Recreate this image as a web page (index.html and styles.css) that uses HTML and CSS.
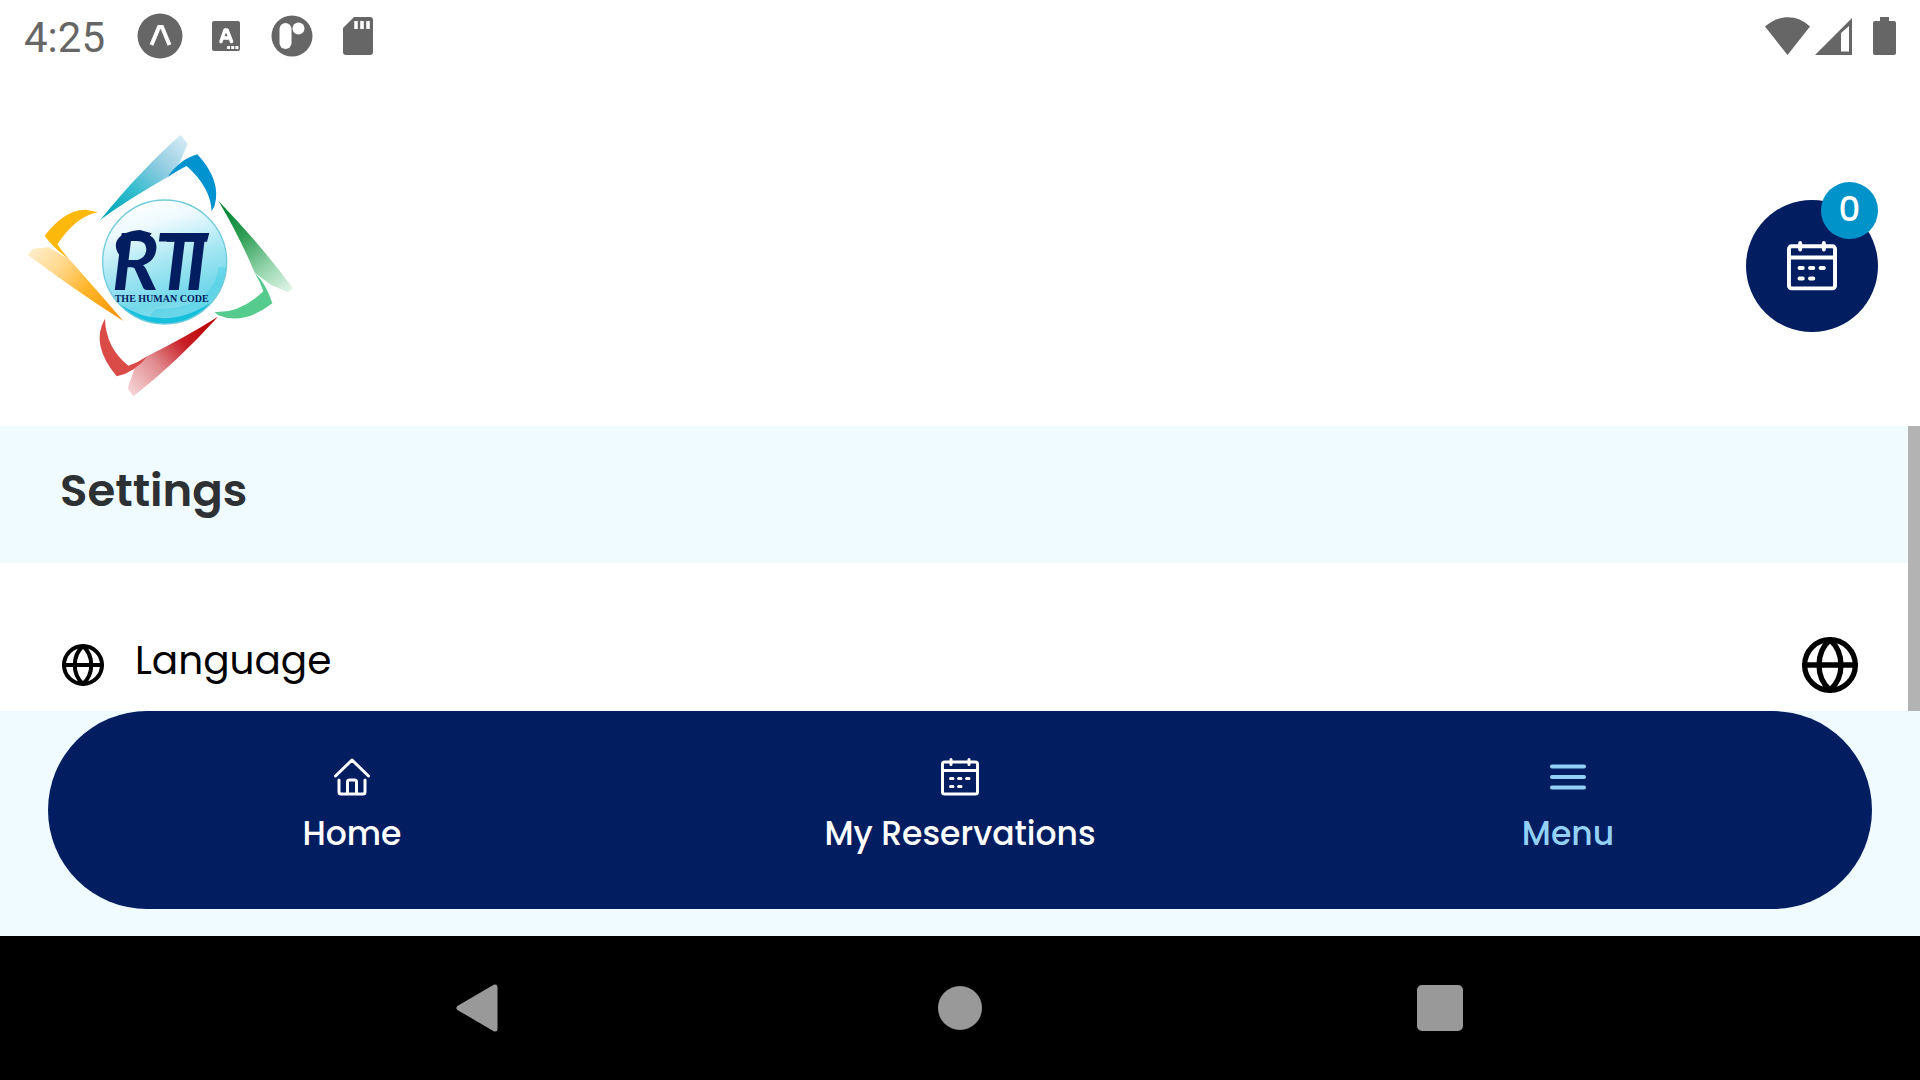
FILE: index.html
```html
<!DOCTYPE html>
<html lang="en">
<head>
  <meta charset="UTF-8">
  <meta name="viewport" content="width=device-width, initial-scale=1.0">
  <title>Settings - RTI The Human Code</title>
  <link rel="stylesheet" href="styles.css">
</head>
<body>
  <div class="status-bar">
    <span class="clock">4:25</span>
    <div class="status-left">
      <svg width="48" height="48" viewBox="0 0 48 48">
        <circle cx="24" cy="24" r="22.500" fill="#666"/>
        <path d="M15.500 33 23 15h3l7.500 18" fill="none" stroke="#fff" stroke-width="4"/>
      </svg>
      <svg width="48" height="48" viewBox="0 0 48 48">
        <rect x="10" y="9" width="28" height="30" rx="2" fill="#666"/>
        <path d="M19 29.500 23 18h2l4.500 11.500M21 26h6.500" fill="none" stroke="#fff" stroke-width="3.500" stroke-linecap="round" stroke-linejoin="round"/>
        <path d="M25 35.500h3m1.200 0h3m1.200 0h3" stroke="#fff" stroke-width="3"/>
      </svg>
      <svg width="48" height="48" viewBox="0 0 48 48">
        <circle cx="24" cy="24" r="20.500" fill="#666"/>
        <rect x="11.500" y="11" width="12" height="26" rx="6" fill="#fff"/>
        <circle cx="30.500" cy="16.500" r="6" fill="#fff"/>
      </svg>
      <svg width="48" height="48" viewBox="0 0 48 48">
        <path d="M20 5h16q3 0 3 3v32q0 3-3 3H12q-3 0-3-3V16z" fill="#666"/>
        <path d="M22 9v8m6-8v8m6-8v8" stroke="#fff" stroke-width="3.500"/>
      </svg>
    </div>
    <div class="status-right">
      <svg width="46" height="38" viewBox="0 0 46 38"><path d="M0 9.500C14-3 32-3 45 9.500L22.500 38z" fill="#666"/></svg>
      <svg width="38" height="38" viewBox="0 0 38 38"><path d="M0 38 37 1v37zM26 34.500h8V9l-8 7z" fill="#666" fill-rule="evenodd"/></svg>
      <svg class="battery" width="23" height="38" viewBox="0 0 23 38"><path d="M7 0h9v4h5q2 0 2 2v30q0 2-2 2H2q-2 0-2-2V6q0-2 2-2h5z" fill="#666"/></svg>
    </div>
  </div>

  <header class="header">
    <svg class="logo" viewBox="51 40 801 789" role="img" aria-label="RTI The Human Code">
      <defs>
        <linearGradient id="teal" gradientUnits="userSpaceOnUse" x1="290" y1="290" x2="525" y2="55">
          <stop offset="0" stop-color="#00a5b4"/><stop offset=".35" stop-color="#35bdd0"/><stop offset=".65" stop-color="#8dcbe0"/><stop offset="1" stop-color="#d3eaf4"/>
        </linearGradient>
        <linearGradient id="green" gradientUnits="userSpaceOnUse" x1="635" y1="250" x2="840" y2="510">
          <stop offset="0" stop-color="#008233"/><stop offset=".35" stop-color="#2f9e55"/><stop offset=".7" stop-color="#94d5ad"/><stop offset="1" stop-color="#e0f4e7"/>
        </linearGradient>
        <linearGradient id="red" gradientUnits="userSpaceOnUse" x1="610" y1="595" x2="360" y2="815">
          <stop offset="0" stop-color="#b80000"/><stop offset=".35" stop-color="#c91f26"/><stop offset=".65" stop-color="#e08a8e"/><stop offset="1" stop-color="#f6d3d5"/>
        </linearGradient>
        <linearGradient id="amber" gradientUnits="userSpaceOnUse" x1="330" y1="590" x2="65" y2="390">
          <stop offset="0" stop-color="#f39200"/><stop offset=".4" stop-color="#ffb62b"/><stop offset=".7" stop-color="#ffd78a"/><stop offset="1" stop-color="#ffedca"/>
        </linearGradient>
        <linearGradient id="ball" x1=".3" y1="0" x2=".6" y2="1">
          <stop offset="0" stop-color="#fff"/><stop offset=".2" stop-color="#eefafe"/><stop offset=".5" stop-color="#a9e7f3"/><stop offset=".8" stop-color="#72d8ea"/><stop offset="1" stop-color="#8fe1ef"/>
        </linearGradient>
      </defs>
      <path d="M271 297 C350 200 435 110 512 42 L533 70 L509 126 L472 170 Q365 230 271 297z" fill="url(#teal)"/>
      <path d="M472 170 Q510 115 562 101 Q635 180 614 255 L605 272 Q602 200 530 136 Q505 148 472 170z" fill="#0093d0"/>
      <path d="M625 240 Q750 370 849 503 L834 515 L782 492 L734 456 Q690 350 625 240z" fill="url(#green)"/>
      <path d="M734 456 Q768 488 787 548 Q700 615 625 584 L613 574 Q690 578 760 512 Q752 485 734 456z" fill="#55cb8e"/>
      <path d="M624 588 Q500 725 370 827 L353 803 L373 745 L414 705 Q525 650 624 588z" fill="url(#red)"/>
      <path d="M414 705 Q375 755 320 767 Q240 670 285 594 Q287 680 355 735 Q385 725 414 705z" fill="#da4b48"/>
      <path d="M340 601 Q190 505 53 402 L69 384 L116 380 L180 418 Q257 505 340 601z" fill="url(#amber)"/>
      <path d="M180 418 Q130 382 104 345 Q165 265 228 267 L264 275 Q200 285 142 371 Q160 398 180 418z" fill="#fdb90b"/>
      <circle cx="464" cy="424" r="186" fill="url(#ball)"/>
      <path d="M625 440 C620 520 535 570 440 565 Q405 590 430 606 A186 186 0 0 0 649 440z" fill="#36c9e3" opacity=".35"/>
      <path d="M325 548 Q460 640 605 544 Q550 608 464 610 Q380 608 325 548z" fill="#00bad9" opacity=".8"/>
      <circle cx="464" cy="424" r="186" fill="none" stroke="#6fcbdc" stroke-width="4"/>
      <g class="logo-letters">
        <text x="305" y="507">R</text>
        <text x="434" y="507">T</text>
        <text x="526" y="507">I</text>
      </g>
      <path d="M330 405 C305 375 315 333 390 328 L425 338 L410 358 C360 350 335 367 330 405z" fill="#021d60"/>
      <path d="M475 337 H598 L591 363 H470z" fill="#021d60"/>
      <text class="logo-caption" x="455" y="545">THE HUMAN CODE</text>
    </svg>
    <button class="cart" type="button" aria-label="Reservations">
      <svg width="50" height="50" viewBox="0 0 38 38" class="icon"><use href="#calendar"/></svg>
      <span class="badge">0</span>
    </button>
  </header>

  <main class="content">
    <h1 class="section-title">Settings</h1>
    <div class="setting-row">
      <svg class="icon globe" width="42" height="42" viewBox="0 0 42 42"><use href="#globe"/></svg>
      <span class="setting-label" id="langLabel">Language</span>
      <button class="lang-btn" type="button" aria-labelledby="langLabel">
        <svg class="icon globe" width="56" height="56" viewBox="0 0 42 42"><use href="#globe"/></svg>
      </button>
    </div>
    <div class="scrollbar"></div>
  </main>

  <div class="tabs-wrap">
    <nav class="tabs">
      <a class="tab" href="#home">
        <svg class="icon" width="38" height="38" viewBox="0 0 38 38"><path d="M2.500 18 19 2l16.500 16M6 22v12q0 2 2 2h22q2 0 2-2V22M14.500 36V24q0-2 2-2h5q2 0 2 2v12"/></svg>
        Home
      </a>
      <a class="tab" href="#reservations">
        <svg class="icon" width="38" height="38" viewBox="0 0 38 38">
          <g id="calendar">
            <rect x="1.500" y="4" width="35" height="32" rx="2"/>
            <path d="M1.500 12.500h35M10 1.500v5M28 1.500v5M9.500 20.500h2.500m5.500 0H20m5.500 0H28M9.500 28.500h2.500m5.500 0H20"/>
          </g>
        </svg>
        My Reservations
      </a>
      <a class="tab active" href="#menu">
        <svg class="icon" width="38" height="38" viewBox="0 0 38 38"><path d="M3 8.500h32M3 19h32M3 29.500h32"/></svg>
        Menu
      </a>
    </nav>
  </div>

  <div class="system-nav">
    <button type="button" aria-label="Back"><svg width="48" height="48" viewBox="0 0 48 48"><path d="M39 3v42L3 24z" stroke="#999" stroke-width="5" stroke-linejoin="round" fill="#999"/></svg></button>
    <button type="button" aria-label="Home"><svg width="48" height="48" viewBox="0 0 48 48"><circle cx="24" cy="24" r="22" fill="#999"/></svg></button>
    <button type="button" aria-label="Recent apps"><svg width="48" height="48" viewBox="0 0 48 48"><rect x="1" y="1" width="46" height="46" rx="5" fill="#999"/></svg></button>
  </div>

  <svg class="defs" width="0" height="0" aria-hidden="true">
    <g id="globe">
      <circle cx="21" cy="21" r="19"/>
      <path d="M2 21h38M21 2C10 12 10 30 21 40M21 2c11 10 11 28 0 38"/>
    </g>
  </svg>
</body>
</html>
```
FILE: styles.css
```css
* { box-sizing: border-box; }
body { margin: 0; min-height: 100vh; display: flex; flex-direction: column; background: #fff; color: #000; font-family: Poppins, Inter, sans-serif; }
button { border: none; padding: 0; background: none; color: inherit; font: inherit; cursor: pointer; }
svg { display: block; flex: none; }
.defs { position: absolute; }
.icon { fill: none; stroke: currentColor; stroke-width: 3; stroke-linecap: round; stroke-linejoin: round; }
.globe { stroke-width: 4; }

.status-bar { display: flex; align-items: center; height: 72px; padding: 0 24px; color: #666; }
.clock { width: 112px; font-family: Roboto, sans-serif; font-size: 42px; line-height: 48px; padding-top: 4px; }
.status-left { display: flex; gap: 18px; }
.status-right { display: flex; gap: 4px; margin-left: auto; }
.battery { margin-left: 16px; }

.header { display: flex; align-items: center; justify-content: space-between; padding: 62px 42px 29px 27px; }
.logo { width: 267px; height: 263px; }
.logo-letters { font-family: Lato, sans-serif; font-size: 236px; font-weight: 700; font-style: italic; fill: #021d60; }
.logo-caption { font-family: "Liberation Serif", serif; font-size: 30px; font-weight: 700; fill: #021d60; text-anchor: middle; }
.cart { position: relative; display: flex; align-items: center; justify-content: center; width: 132px; height: 132px; border-radius: 50%; background: #021d60; color: #fff; }
.badge { position: absolute; top: -18px; right: 0; width: 57px; height: 57px; border-radius: 50%; background: #0093c9; font-size: 34px; font-weight: 500; line-height: 55px; text-align: center; }

.content { position: relative; flex: 1; }
.section-title { margin: 0; padding: 35px 60px 42px; background: #effbff; color: #2d3134; font-size: 45px; font-weight: 600; line-height: 60px; }
.setting-row { display: flex; align-items: center; padding: 74px 62px 18px; }
.setting-label { margin-left: 31px; font-size: 39px; line-height: 48px; padding-bottom: 8px; }
.lang-btn { margin-left: auto; }
.scrollbar { position: absolute; top: 0; right: 0; bottom: 0; width: 12px; background: #b3b3b3; }

.tabs-wrap { padding: 0 48px 27px; background: #effbff; }
.tabs { display: grid; grid-template-columns: repeat(3, 1fr); border-radius: 99px; background: #021d60; }
.tab { display: flex; flex-direction: column; align-items: center; gap: 18px; padding: 47px 0 55px; color: #fff; font-size: 33px; font-weight: 500; line-height: 40px; text-decoration: none; }
.tab.active { color: #92d1f5; }
.tab.active .icon { stroke-width: 4; }

.system-nav { display: grid; grid-template-columns: repeat(3, 1fr); height: 144px; padding: 0 12.5%; background: #000; }
.system-nav button { display: flex; align-items: center; justify-content: center; }
```
